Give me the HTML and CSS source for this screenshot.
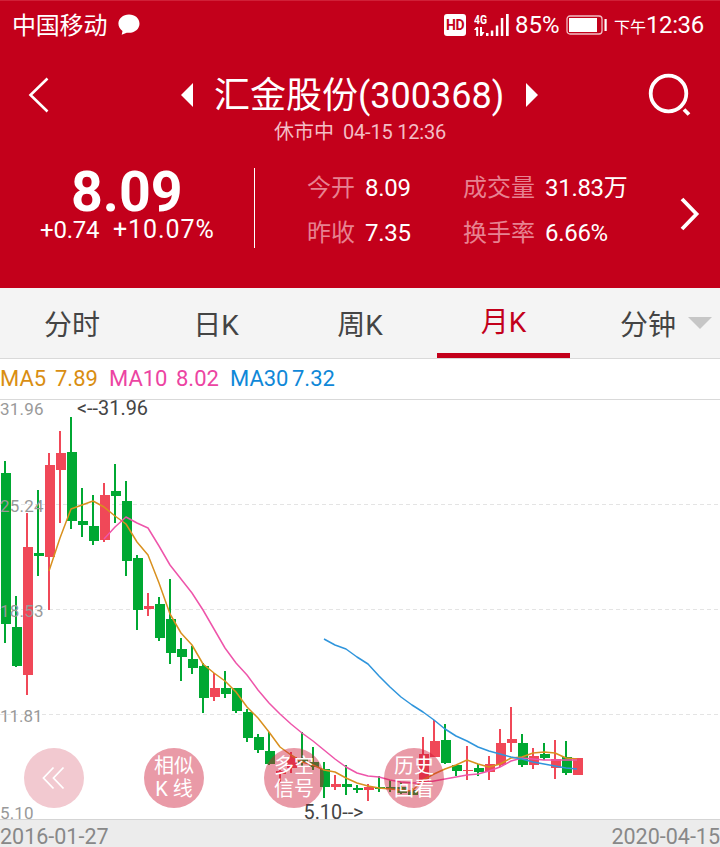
FILE: index.html
```html
<!DOCTYPE html>
<html lang="zh-CN">
<head>
<meta charset="utf-8">
<title>汇金股份(300368)</title>
<link rel="stylesheet" href="styles.css">
</head>
<body>
<header class="header">
  <div class="status">
    <span class="carrier">中国移动</span>
    <svg class="bubble" width="22" height="22" viewBox="0 0 22 22"><path d="M11 .5C5 .5.4 4.500.4 9.500c0 3.300 1.700 5.800 4.100 7.400L3.700 20.800 8.700 18.700C15.800 19.700 21.500 15.400 21.500 9.700 21.500 4.300 17 .5 11 .5Z" fill="#fff"/></svg>
    <span class="hd">HD</span>
    <svg class="signal" width="36" height="24" viewBox="0 0 36 24" fill="#fff">
      <text class="net" x="0" y="10.500" textLength="13" lengthAdjust="spacingAndGlyphs">4G</text>
      <path d="M2.200 14h2v9h-2v-6H0ZM6 14h2v5h2.500L8 23H6ZM12 20h2.500v3H12ZM16.800 17.500h2.500v5.500h-2.500ZM21.800 12.500h2.500v10.500h-2.500ZM26.800 5h2.500v18h-2.500ZM32 1h2.700v22H32Z"/>
    </svg>
    <span class="percent">85%</span>
    <svg class="battery" width="42" height="20" viewBox="0 0 42 20"><rect x="1" y="1" width="35" height="18" rx="3" fill="none" stroke="#fff" stroke-opacity=".75" stroke-width="1.300"/><path d="M3 3h28v14H3ZM38.500 4h2.200v12h-2.200Z" fill="#fff"/></svg>
    <span class="ampm">下午</span><span class="clock">12:36</span>
  </div>
  <div class="titlebar">
    <svg class="back" width="22" height="36" viewBox="0 0 22 36"><path d="M19.500 1.500 2.500 18l17 16.500" fill="none" stroke="#fff" stroke-width="2.600"/></svg>
    <svg class="prev" width="12" height="24" viewBox="0 0 12 24"><path d="M12 0v24L0 12Z" fill="#fff"/></svg>
    <h1 class="title">汇金股份(300368)</h1>
    <svg class="next" width="12" height="24" viewBox="0 0 12 24"><path d="M0 0v24L12 12Z" fill="#fff"/></svg>
    <svg class="search" width="44" height="44" viewBox="0 0 44 44" fill="none" stroke="#fff" stroke-width="3.800"><circle cx="20.500" cy="20.500" r="17.800"/><path d="m36 36.500 5 5"/></svg>
  </div>
  <div class="session"><span>休市中</span><span class="stamp">04-15 12:36</span></div>
  <div class="quote">
    <div class="price">
      <div class="last">8.09</div>
      <div class="change"><span class="diff">+0.74</span><span class="pct">+10.07%</span></div>
    </div>
    <div class="stats">
      <span class="label">今开</span><span class="value">8.09</span><span class="label">成交量</span><span class="value">31.83万</span>
      <span class="label">昨收</span><span class="value">7.35</span><span class="label">换手率</span><span class="value">6.66%</span>
    </div>
    <svg class="more" width="20" height="34" viewBox="0 0 20 34"><path d="m2 2 14.500 15L2 32" fill="none" stroke="#fff" stroke-width="3.800"/></svg>
  </div>
</header>
<nav class="tabs">
  <a class="tab">分时</a><a class="tab">日K</a><a class="tab">周K</a><a class="tab active">月K</a><a class="tab last-tab">分钟<i class="caret"></i></a>
</nav>
<div class="legend"><span class="ma5">MA5</span><span class="ma5">7.89</span><span class="ma10">MA10</span><span class="ma10">8.02</span><span class="ma30">MA30</span><span class="ma30">7.32</span></div>
<main class="chart">
  <svg class="plot" width="720" height="419" viewBox="0 400 720 419">
    <path class="grid" d="M0 504.500H720M0 609.500H720M0 714.500H720"/>
    <g id="candles"></g>
    <polyline class="line s5" points="49,571 60,538 71,509 82,505 93,501 104,507 115,516 126,524 137,542 148,555 159,583 170,614 181,633 192,645 203,664 214,673 225,681 236,692 247,707 258,718 269,732 280,747 291,755 302,762 313,765 324,770 335,772 346,778 357,783 368,786 379,788 390,789 401,790 412,791 423,780 434,774 445,769 456,765 467,760 478,764 489,767 500,764 511,758 522,757 533,753 544,752 555,753 566,758 577,759"/>
    <polyline class="line s10" points="104,539 115,527 126,517 137,523 148,528 159,546 170,565 181,579 192,593 203,610 214,629 225,648 236,663 247,675 258,690 269,703 280,714 291,724 302,733 313,741 324,750 335,759 346,767 357,773 368,776 379,777 390,780 401,782 412,783 423,783 434,781 445,779 456,777 467,775 478,774 489,771 500,767 511,761 522,758 533,759 544,760 555,760 577,760"/>
    <polyline class="line s30" points="324,639 335,645 346,649 357,657 368,664 379,676 390,687 401,697 412,705 423,712 434,720 445,729 456,736 467,741 478,747 489,751 500,754 511,757 522,759 533,762 544,764 555,766 566,768 577,769"/>
    <g class="axis">
      <text x="0" y="414.500" textLength="43.500">31.96</text>
      <text x="0" y="511.500" textLength="43.500">25.24</text>
      <text x="0" y="616.500" textLength="43.500">18.53</text>
      <text x="0" y="721.500" textLength="42.500">11.81</text>
      <text x="0" y="819" textLength="33.500">5.10</text>
    </g>
    <g class="mark">
      <text x="77" y="414.500" textLength="71" lengthAdjust="spacingAndGlyphs">&lt;--31.96</text>
      <text x="303.500" y="819" textLength="60" lengthAdjust="spacingAndGlyphs">5.10--&gt;</text>
    </g>
  </svg>
  <div class="actions">
    <button class="round faded"><svg width="24" height="24" viewBox="0 0 24 24" fill="none" stroke="#fff" stroke-width="1.800"><path d="M11.500 1.500 1.500 12l10 10.500M21.500 1.500 11.500 12l10 10.500"/></svg></button>
    <button class="round">相似<br>K 线</button>
    <button class="round">多空<br>信号</button>
    <button class="round">历史<br>回看</button>
  </div>
</main>
<footer class="dates"><span>2016-01-27</span><span>2020-04-15</span></footer>
<script src="chart.js"></script>
</body>
</html>
```
FILE: styles.css
```css
* { box-sizing: border-box; }
body {
  margin: 0;
  width: 720px;
  height: 847px;
  overflow: hidden;
  background: #fff;
  font-family: Roboto, "Noto Sans CJK SC", sans-serif;
}
svg { display: block; flex: none; }
.header {
  height: 288px;
  background: #c3001b;
  border-top: 1px solid #d02038;
  color: #fff;
}
.status {
  display: flex;
  align-items: center;
  height: 47px;
  padding: 0 16px 0 12px;
  white-space: nowrap;
}
.carrier { font-size: 24px; width: 106px; margin-top: -3px; letter-spacing: -.2px; }
.bubble { margin-top: 1px; }
.hd {
  width: 22px;
  height: 22px;
  margin-left: 304px;
  border-radius: 3px;
  background: #fff;
  color: #c3001b;
  font-size: 14px;
  font-weight: 700;
  line-height: 22px;
  text-align: center;
  letter-spacing: -.5px;
}
.signal { margin-left: 8px; }
.net { font-size: 13px; font-weight: 700; }
.percent { font-size: 24px; margin-left: 5px; width: 50px; }
.battery { margin-left: 1px; }
.ampm { font-size: 16px; margin: 3px 0 0 6px; }
.clock { font-size: 24px; letter-spacing: -.4px; }
.titlebar {
  display: flex;
  align-items: center;
  height: 66px;
  margin-top: 14px;
  padding-left: 28px;
}
.back { margin-top: -1px; }
.prev { margin-left: 131px; }
.title {
  width: 290px;
  margin: -7px 0 0 21px;
  font-size: 36px;
  font-weight: 400;
  white-space: nowrap;
}
.next { margin-left: 22px; }
.search { margin-left: 110px; }
.session {
  display: flex;
  gap: 9px;
  height: 30px;
  margin-top: -11px;
  padding-left: 274px;
  line-height: 30px;
  font-size: 20px;
  color: #f3bdc5;
}
.stamp { letter-spacing: -.2px; }
.quote {
  display: flex;
  margin-top: 21px;
  height: 80px;
}
.price {
  width: 255px;
  border-right: 1px solid #fff;
  white-space: nowrap;
}
.last {
  height: 48px;
  padding-left: 71px;
  font-size: 55.5px;
  font-weight: 700;
  line-height: 50px;
}
.change {
  display: flex;
  padding-left: 40px;
  height: 28px;
  line-height: 28px;
  font-size: 24px;
}
.diff { width: 73px; letter-spacing: -.2px; }
.pct { font-size: 25px; letter-spacing: .9px; }
.stats {
  display: grid;
  grid-template-columns: 58px 98px 82px 134px;
  grid-auto-rows: 45px;
  margin: -3px 0 0 52px;
  font-size: 24px;
  line-height: 46px;
  white-space: nowrap;
}
.label { color: #e78291; }
.value { letter-spacing: -.3px; }
.more { margin: 29px 0 0 1px; }
.tabs {
  display: flex;
  height: 71px;
  background: #f4f4f4;
  border-bottom: 1px solid #d9d9d9;
  color: #444;
  font-size: 28px;
}
.tab {
  width: 144px;
  line-height: 75px;
  text-align: center;
  height: 70px;
}
.active {
  width: 133px;
  margin: 0 6px 0 5px;
  color: #c3001b;
  line-height: 69px;
  border-bottom: 5px solid #c3001b;
}
.last-tab { display: flex; padding-left: 44px; }
.caret {
  width: 24px;
  height: 12px;
  margin: 29px 0 0 12px;
  background: #c6c6c6;
  clip-path: polygon(0 0, 100% 0, 50% 100%);
}
.legend {
  display: grid;
  grid-template-columns: 55px 54px 67px 54px 62px 60px;
  height: 41px;
  border-bottom: 1px solid #d9d9d9;
  line-height: 40px;
  font-size: 22px;
}
.ma5 { color: #d98e12; }
.ma10 { color: #ec44a2; }
.ma30 { color: #0f88d8; }
.chart { position: relative; height: 419px; }
.grid { fill: none; stroke: #e4e4e4; stroke-dasharray: 4 3; }
.up { fill: #f04858; }
.down { fill: #00a832; }
.line { fill: none; stroke-width: 1.5; stroke-linejoin: round; }
.s5 { stroke: #d9901e; }
.s10 { stroke: #ee55aa; }
.s30 { stroke: #2f95dc; }
.axis { fill: #999; font-size: 17px; }
.mark { fill: #444; font-size: 20px; }
.actions {
  position: absolute;
  left: 24px;
  top: 348px;
  display: flex;
  gap: 60px;
}
.round {
  display: flex;
  align-items: center;
  justify-content: center;
  width: 60px;
  height: 60px;
  padding: 0;
  border: 0;
  border-radius: 50%;
  background: rgba(205, 20, 50, .43);
  color: #fff;
  font: 20px/23px Roboto, "Noto Sans CJK SC", sans-serif;
}
.faded { background: #f2c9d0; }
.dates {
  display: flex;
  justify-content: space-between;
  height: 28px;
  border-top: 1px solid #d5d5d5;
  background: #ececec;
  color: #888;
  font-size: 21.5px;
  line-height: 34px;
}
```
FILE: chart.js
```javascript
// Each candle: direction, high, body top, body bottom, low
const candles = [
  ['d',461,473,624,643],['d',596,627,666,667],['u',513,547,675,695],['d',490,553,556,576],
  ['u',453,465,557,610],['u',431,453,470,523],['d',417,452,521,529],['d',488,521,525,537],
  ['d',495,526,541,545],['u',483,495,540,542],['d',464,491,496,523],['d',481,501,561,576],
  ['d',555,558,610,630],['u',593,606,609,616],['d',597,604,638,641],['d',579,619,653,664],
  ['d',638,649,657,681],['d',646,659,668,674],['d',663,666,698,713],['u',673,688,697,701],
  ['d',671,688,694,698],['d',688,688,711,713],['d',709,712,738,742],['d',734,737,750,753],
  ['d',732,751,764,765],['u',770,771,774,783],['u',752,757,768,773],['d',732,759,763,766],
  ['d',747,762,767,770],['d',762,769,787,798],['u',775,784,787,790],['d',765,784,787,795],
  ['d',785,788,790,793],['u',784,787,790,801],['d',776,787,789,792],['d',780,787,789,792],
  ['d',782,787,793,794],['d',788,790,795,795],['u',737,754,783,783],['u',720,741,757,757],
  ['d',724,740,763,764],['d',765,765,771,776],['u',746,770,771,780],['d',764,768,772,776],
  ['u',756,764,772,780],['u',729,743,765,767],['u',707,739,743,752],['d',734,743,765,767],
  ['u',748,756,765,769],['d',743,754,758,760],['u',740,759,768,779],['d',741,757,773,775],
  ['u',758,758,775,775]
];
const layer = document.getElementById('candles');
candles.forEach(([dir, high, top, bottom, low], i) => {
  const x = 1 + 11 * i;
  const path = document.createElementNS('http://www.w3.org/2000/svg', 'path');
  path.setAttribute('class', dir === 'u' ? 'up' : 'down');
  path.setAttribute('d', `M${x} ${top}h10V${bottom}h-10ZM${x + 3} ${high}h2V${low}h-2Z`);
  layer.appendChild(path);
});
```
